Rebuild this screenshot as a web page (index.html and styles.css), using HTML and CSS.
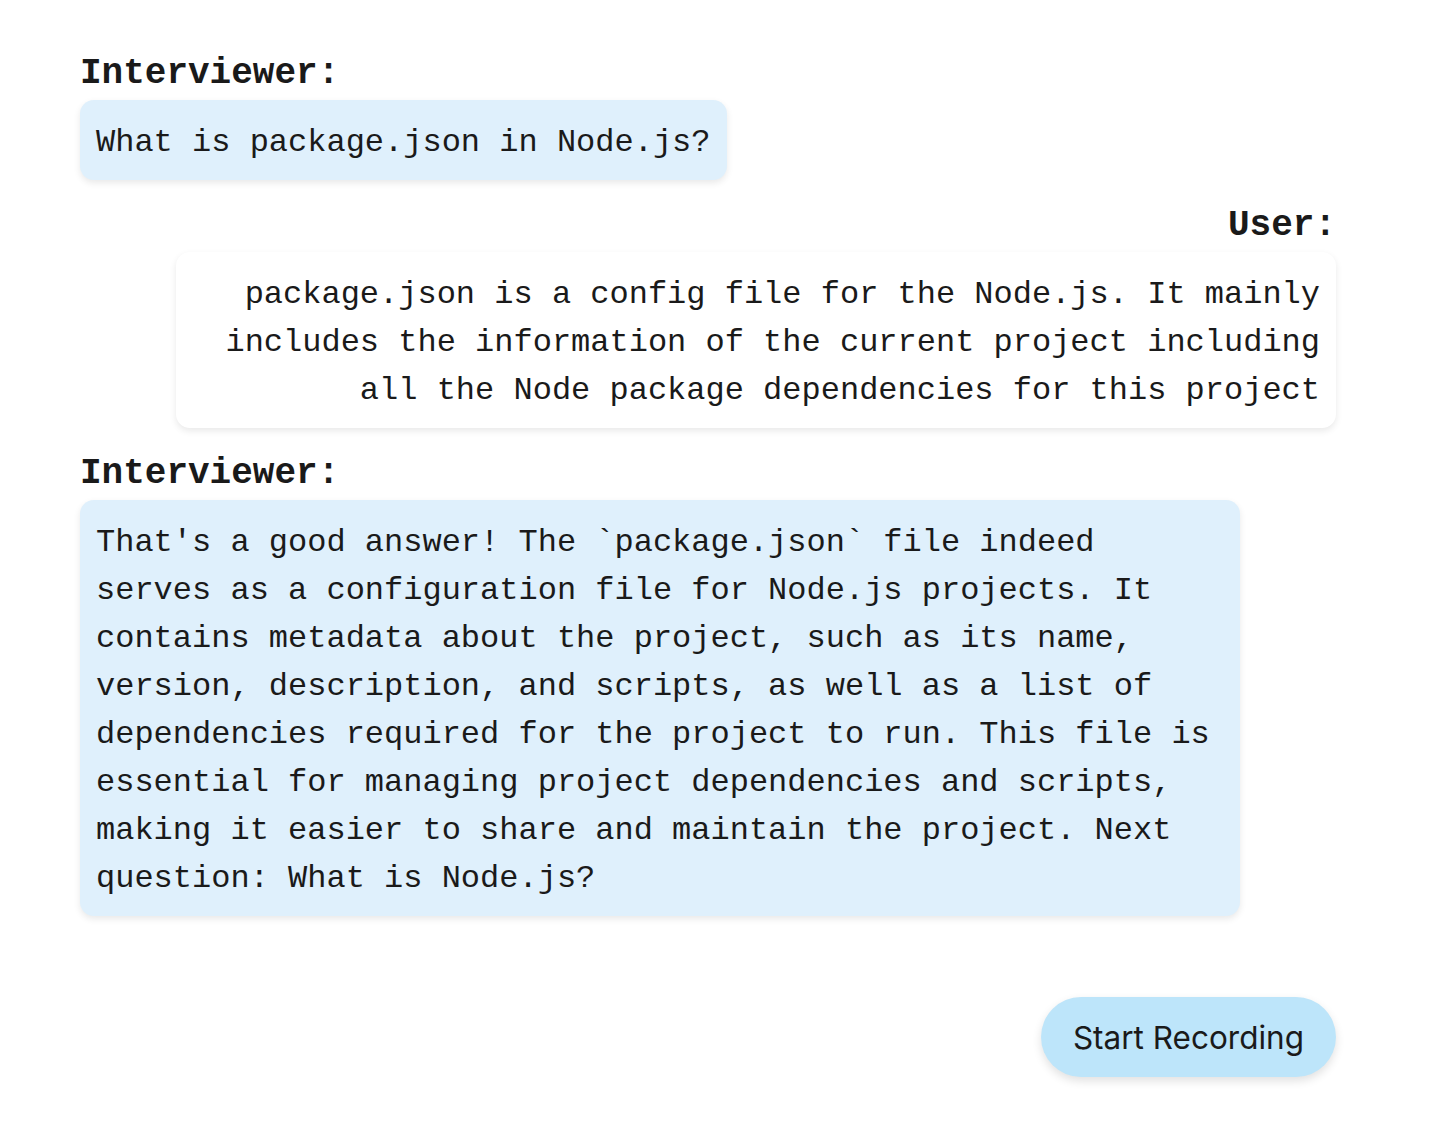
FILE: index.html
```html
<!DOCTYPE html>
<html lang="en">
<head>
<meta charset="utf-8">
<title>Interview</title>
<link rel="stylesheet" href="styles.css">
</head>
<body>
<main class="chat">
  <section class="msg msg-interviewer">
    <h2 class="speaker">Interviewer:</h2>
    <div class="bubble bubble-interviewer">What is package.json in Node.js?</div>
  </section>
  <section class="msg msg-user">
    <h2 class="speaker">User:</h2>
    <div class="bubble bubble-user">package.json is a config file for the Node.js. It mainly includes the information of the current project including all the Node package dependencies for this project</div>
  </section>
  <section class="msg msg-interviewer">
    <h2 class="speaker">Interviewer:</h2>
    <div class="bubble bubble-interviewer">That's a good answer! The `package.json` file indeed serves as a configuration file for Node.js projects. It contains metadata about the project, such as its name, version, description, and scripts, as well as a list of dependencies required for the project to run. This file is essential for managing project dependencies and scripts, making it easier to share and maintain the project. Next question: What is Node.js?</div>
  </section>
  <div class="actions">
    <button class="record-btn" type="button">Start Recording</button>
  </div>
</main>
</body>
</html>
```

FILE: styles.css
```css
html, body {
  margin: 0;
  padding: 0;
  background: #ffffff;
}

body {
  font-family: "Liberation Mono", "DejaVu Sans Mono", monospace;
  color: #1a1a1a;
}

.chat {
  padding: 52px 120px 40px 80px;
  display: flex;
  flex-direction: column;
}

.msg {
  display: flex;
  flex-direction: column;
  margin-bottom: 24px;
}

.msg-interviewer {
  align-items: flex-start;
}

.msg-user {
  align-items: flex-end;
}

.speaker {
  margin: 0 0 6px 0;
  padding-top: 2px;
  font-size: 36px;
  line-height: 40px;
  font-weight: 700;
  color: #1a1a1a;
}

.bubble {
  max-width: 1160px;
  box-sizing: border-box;
  padding: 19px 16px 13px 16px;
  font-size: 32px;
  line-height: 48px;
  border-radius: 14px;
  box-shadow: 0 3px 7px rgba(0, 0, 0, 0.09);
  white-space: pre-wrap;
}

.bubble-interviewer {
  background: #dff0fc;
}

.bubble-user {
  background: #ffffff;
  text-align: right;
}

.actions {
  display: flex;
  justify-content: flex-end;
  margin-top: 57px;
}

.record-btn {
  font-family: Inter, "Noto Sans", sans-serif;
  font-size: 31.5px;
  color: #1a1a1a;
  background: #bde5fa;
  border: none;
  border-radius: 40px;
  height: 80px;
  padding: 0 32px;
  box-shadow: 0 4px 10px rgba(0, 0, 0, 0.12);
  cursor: pointer;
}
```
